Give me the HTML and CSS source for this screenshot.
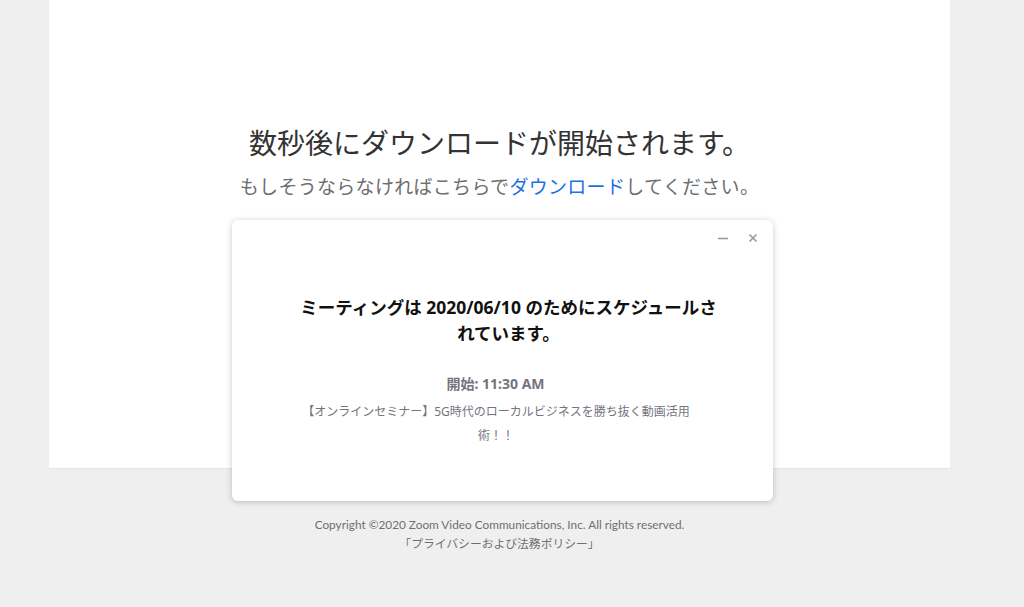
FILE: index.html
```html
<!DOCTYPE html>
<html lang="ja">
<head>
<meta charset="utf-8">
<title>Zoom</title>
<link rel="stylesheet" href="styles.css">
</head>
<body>
<main class="card">
  <h1 class="title">数秒後にダウンロードが開始されます。</h1>
  <p class="sub">もしそうならなければこちらで<a class="link" href="#">ダウンロード</a>してください。</p>
</main>
<footer class="footer">
  <div class="copy">Copyright ©2020 Zoom Video Communications, Inc. All rights reserved.</div>
  <div class="policy">「プライバシーおよび法務ポリシー」</div>
</footer>
<div class="modal">
  <div class="modal-bar">
    <span class="ctl ctl-min" aria-label="minimize">
      <svg width="12" height="12" viewBox="0 0 12 12"><path d="M1 6.5h10" stroke="#9a9a9a" stroke-width="1.6"/></svg>
    </span>
    <span class="ctl ctl-close" aria-label="close">
      <svg width="12" height="12" viewBox="0 0 12 12"><path d="M2.5 2.5l7 7M9.5 2.5l-7 7" stroke="#9a9a9a" stroke-width="1.7"/></svg>
    </span>
  </div>
  <h2 class="m-title">ミーティングは 2020/06/10 のためにスケジュールされています。</h2>
  <div class="m-time">開始: 11:30 AM</div>
  <div class="m-desc">【オンラインセミナー】5G時代のローカルビジネスを勝ち抜く動画活用術！！</div>
</div>
</body>
</html>
```

FILE: styles.css
```css
html, body {
  margin: 0;
  padding: 0;
}
body {
  background: #efefef;
  font-family: "Noto Sans CJK JP", sans-serif;
  width: 1024px;
  height: 607px;
  overflow: hidden;
}
.card {
  margin: 0 74px 0 49px;
  height: 469px;
  background: #ffffff;
  border-bottom: 1px solid #e4e4e4;
  box-sizing: border-box;
  padding-top: 122px;
  display: flex;
  flex-direction: column;
  align-items: center;
}
.title {
  margin: 0;
  font-size: 28px;
  line-height: 40px;
  font-weight: 400;
  color: #333333;
  letter-spacing: 0;
}
.sub {
  margin: 10px 0 0;
  font-size: 19px;
  line-height: 28px;
  color: #6e6e6e;
  letter-spacing: 0.3px;
}
.link {
  color: #1f6fe5;
  text-decoration: none;
}
.footer {
  margin: 0 74px 0 49px;
  padding-top: 46px;
  text-align: center;
  font-family: Lato, "Noto Sans CJK JP", sans-serif;
  font-size: 11.8px;
  line-height: 19px;
  color: #6f6f6f;
}
.modal {
  position: absolute;
  left: 232px;
  top: 220px;
  width: 541px;
  height: 281px;
  box-sizing: border-box;
  background: #ffffff;
  border-radius: 6px;
  box-shadow: 0 1px 6px rgba(0, 0, 0, 0.22);
  font-family: "Noto Sans", "Noto Sans CJK JP", sans-serif;
}
.modal-bar {
  height: 36px;
  display: flex;
  justify-content: flex-end;
  align-items: center;
  gap: 18px;
  padding-right: 14px;
}
.ctl {
  display: flex;
  width: 12px;
  height: 12px;
}
.m-title {
  margin: 38px 50px 0 62px;
  text-align: center;
  font-size: 17.5px;
  line-height: 26px;
  font-weight: 700;
  color: #111111;
}
.m-time {
  margin-top: 28px;
  text-align: center;
  font-size: 14px;
  line-height: 20px;
  font-weight: 700;
  color: #747480;
  padding-right: 14px;
}
.m-desc {
  margin: 6px 81px 0 68px;
  text-align: center;
  font-size: 12px;
  line-height: 24px;
  color: #74747e;
}
```
